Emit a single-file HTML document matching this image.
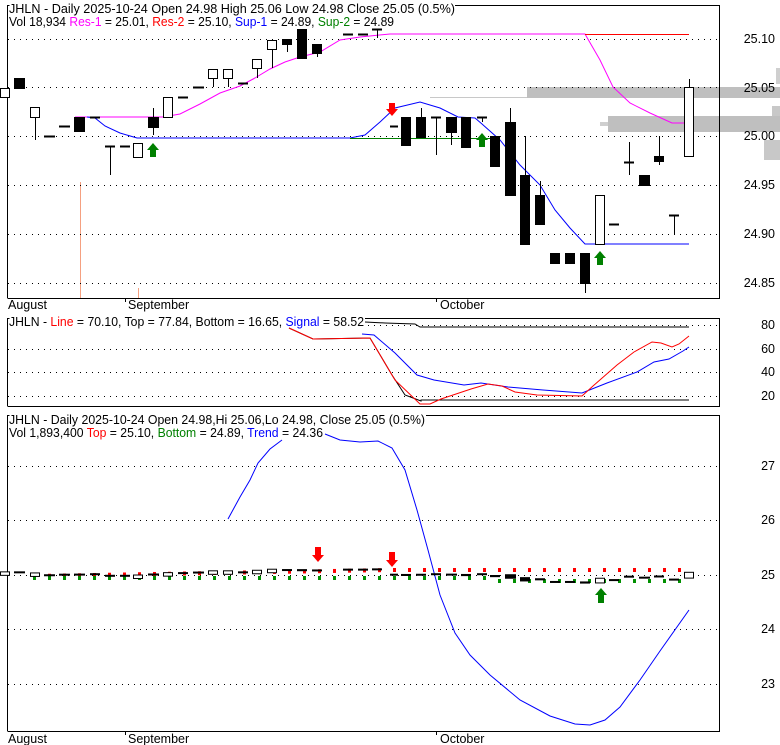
<!DOCTYPE html>
<html><head><meta charset="utf-8"><style>
body{margin:0;background:#fff;width:780px;height:745px;overflow:hidden}
svg{display:block}
text{font-family:"Liberation Sans",sans-serif;font-size:12.5px;fill:#000}
</style></head><body>
<svg id="s" width="780" height="745" xmlns="http://www.w3.org/2000/svg">
<rect x="527" y="87" width="253" height="11" fill="#bfbfbf"/>
<line x1="430" y1="97.5" x2="527" y2="97.5" stroke="#c8c8c8"/>
<rect x="608" y="116" width="172" height="16" fill="#bfbfbf"/>
<rect x="600" y="122" width="8" height="4" fill="#cfcfcf"/>
<rect x="776" y="68" width="4" height="16" fill="#cfcfcf"/>
<rect x="764" y="140" width="16" height="20" fill="#c8c8c8"/>
<rect x="772" y="106" width="8" height="10" fill="#c8c8c8"/>
<line x1="7.5" y1="150" x2="7.5" y2="298" stroke="#f5a080"/>
<line x1="80.5" y1="182" x2="80.5" y2="298" stroke="#f5a080"/>
<line x1="138.5" y1="288" x2="138.5" y2="298" stroke="#f5a080"/>
<g id="grid" stroke="#000" stroke-dasharray="1,5"></g>
<rect x="8" y="316" width="360" height="11" fill="#fff"/>
<path d="M7.5 298V5.5h2M455 5.5H719.5V298.5H7.5" fill="none" stroke="#000"/>
<text x="9" y="13" textLength="446" lengthAdjust="spacingAndGlyphs">JHLN - Daily 2025-10-24 Open 24.98  High 25.06  Low 24.98  Close 25.05 (0.5%)</text>
<text x="9" y="26" textLength="385" lengthAdjust="spacingAndGlyphs">Vol 18,934 <tspan fill="#ff00ff">Res-1</tspan> = 25.01, <tspan fill="#ff0000">Res-2</tspan> = 25.10, <tspan fill="#0000ff">Sup-1</tspan> = 24.89, <tspan fill="#008000">Sup-2</tspan> = 24.89</text>
<g text-anchor="end"><text x="775" y="43">25.10</text><text x="775" y="92">25.05</text><text x="775" y="140">25.00</text><text x="775" y="189">24.95</text><text x="775" y="238">24.90</text><text x="775" y="287">24.85</text></g>
<polyline fill="none" stroke="#ff00ff" points="75,117 163,117 180,114 200,104 220,93 240,86 255,78 270,69 285,62 300,57 320,52 340,40 360,37 390,34 585,34 600,60 613,87 630,103 650,113 672,123 684,123"/>
<line x1="585" y1="34.5" x2="689" y2="34.5" stroke="#ff0000"/>
<polyline fill="none" stroke="#0000ff" points="87,117 95,118 105,126 120,133 137,138 350,138 365,135 380,122 395,108 420,102 440,108 458,117 475,118 482,124 500,140 520,165 540,185 555,210 570,228 585,244 689,244"/>
<line x1="350" y1="138.5" x2="490" y2="138.5" stroke="#008000"/>
<g id="c1"></g>
<path d="M389 103h6v6h3l-6 7-6-7h3z" fill="#ff0000"/>
<path d="M150 157h6v-7h3l-6-7-6 7h3z" fill="#008000"/>
<path d="M479 147h6v-7h3l-6-7-6 7h3z" fill="#008000"/>
<path d="M597 265h6v-7h3l-6-7-6 7h3z" fill="#008000"/>
<text x="8" y="309">August</text><line x1="125.5" y1="298" x2="125.5" y2="302" stroke="#000"/><text x="128" y="309">September</text><line x1="436.5" y1="298" x2="436.5" y2="302" stroke="#000"/><text x="440" y="309">October</text>
<path d="M7.5 406V318.5h2M365 318.5H719.5V406.5H7.5" fill="none" stroke="#000"/>
<text x="9" y="326" textLength="355" lengthAdjust="spacingAndGlyphs">JHLN - <tspan fill="#ff0000">Line</tspan> = 70.10, Top = 77.84, Bottom = 16.65, <tspan fill="#0000ff">Signal</tspan> = 58.52</text>
<g text-anchor="end"><text x="775" y="329">80</text><text x="775" y="353">60</text><text x="775" y="376">40</text><text x="775" y="400">20</text></g>
<polyline fill="none" stroke="#000" points="365,322 385,323 415,324 420,327 689,327"/>
<polyline fill="none" stroke="#000" points="289,328 313,339 370,338 392,375 405,395 421,401 421,400 689,400"/>
<polyline fill="none" stroke="#0000ff" points="362,334 374,335 395,353 417,375 434,380 464,385 481,383 508,387 543,390 582,393 607,383 637,372 654,362 669,359 683,351 689,347"/>
<polyline fill="none" stroke="#ff0000" points="289,328 313,339 370,338 395,380 420,404 430,404 441,399 456,394 471,389 488,384 502,386 515,392 537,395 582,396 593,386 617,365 634,352 652,342 661,343 672,347 679,344 689,336"/>
<path d="M7.5 731V415.5h2M426 415.5H719.5V731.5H7.5" fill="none" stroke="#000"/>
<polyline fill="none" stroke="#0000ff" points="228,519 240,497 250,480 258,463 270,449 282,440"/>
<polyline fill="none" stroke="#0000ff" points="325,434 340,440 360,442 378,441 392,448 405,470 417,510 428,550 440,595 455,633 470,655 490,675 520,700 550,716 575,724 590,725 605,720 620,707 640,680 660,651 689,610"/>
<text x="9" y="424" textLength="416" lengthAdjust="spacingAndGlyphs">JHLN - Daily 2025-10-24 Open 24.98,Hi 25.06,Lo 24.98, Close 25.05 (0.5%)</text>
<text x="9" y="437" textLength="314" lengthAdjust="spacingAndGlyphs">Vol 1,893,400 <tspan fill="#ff0000">Top</tspan> = 25.10, <tspan fill="#008000">Bottom</tspan> = 24.89, <tspan fill="#0000ff">Trend</tspan> = 24.36</text>
<g text-anchor="end"><text x="775" y="470">27</text><text x="775" y="524">26</text><text x="775" y="579">25</text><text x="775" y="633">24</text><text x="775" y="688">23</text></g>
<g id="c3"></g>
<path d="M315 547h6v8h3l-6 7-6-7h3z" fill="#ff0000"/>
<path d="M389 552h6v8h3l-6 7-6-7h3z" fill="#ff0000"/>
<path d="M598 603h6v-8h3l-6-7-6 7h3z" fill="#008000"/>
<text x="8" y="743">August</text><line x1="125.5" y1="731" x2="125.5" y2="735" stroke="#000"/><text x="128" y="743">September</text><line x1="436.5" y1="731" x2="436.5" y2="735" stroke="#000"/><text x="440" y="743">October</text>
</svg>
<script>
var NS="http://www.w3.org/2000/svg";
function el(p,t,a){var e=document.createElementNS(NS,t);for(var k in a)e.setAttribute(k,a[k]);p.appendChild(e);return e;}
var g=document.getElementById('grid');
[39,87,136,185,234,283,325,349,372,396,466,520,575,629,684].forEach(function(y){el(g,'line',{x1:8,x2:719,y1:y+.5,y2:y+.5});});
var C=[[0,10,88,97,88,97,'h'],[14,11,78,88,78,88,'b'],[30,10,107,117,107,140,'h'],[44,11,136,136,136,136,'d'],[59,11,126,126,126,126,'d'],[74,11,117,131,117,131,'b'],[90,10,117,117,117,117,'d'],[105,10,146,146,146,175,'d'],[120,10,146,146,146,146,'d'],[133,10,143,157,143,157,'h'],[148,11,117,127,108,135,'b'],[163,10,97,117,97,117,'h'],[178,10,97,97,97,97,'d'],[193,11,87,87,87,87,'d'],[208,10,69,78,69,87,'h'],[223,10,69,78,69,87,'h'],[238,10,83,83,83,83,'d'],[252,10,59,68,59,78,'h'],[267,10,40,49,40,68,'h'],[282,10,39,44,39,52,'b'],[297,10,29,58,29,58,'b'],[312,10,44,53,44,57,'b'],[343,10,34,34,34,34,'d'],[358,10,34,34,34,34,'d'],[372,10,29,29,29,38,'d'],[390,8,126,126,126,126,'d'],[401,10,117,145,117,145,'b'],[416,10,117,137,108,137,'b'],[431,10,117,117,117,155,'d'],[446,11,117,132,117,145,'b'],[461,10,117,147,117,147,'b'],[477,10,117,117,117,122,'d'],[490,10,136,166,136,166,'b'],[505,11,122,195,108,195,'b'],[520,10,175,244,136,244,'b'],[535,10,195,224,181,224,'b'],[550,10,253,263,253,263,'b'],[565,10,253,263,253,263,'b'],[580,10,253,283,253,293,'b'],[595,10,195,244,195,244,'h'],[609,10,224,224,224,224,'d'],[624,10,162,162,142,175,'d'],[639,11,175,185,175,185,'b'],[654,10,156,161,136,165,'b'],[669,10,215,215,215,234,'d'],[684,10,87,156,79,156,'h']];
var c1=document.getElementById('c1');
C.forEach(function(c){var x=c[0],w=c[1],m=x+Math.floor(w/2)+.5;
 el(c1,'line',{x1:m,x2:m,y1:c[4],y2:c[5],stroke:'#000'});
 if(c[6]=='d')el(c1,'line',{x1:x,x2:x+w,y1:c[2]+.5,y2:c[2]+.5,stroke:'#000','stroke-width':2});
 else el(c1,'rect',{x:x+.5,y:c[2]+.5,width:w-1,height:Math.max(c[3]-c[2],2),fill:c[6]=='b'?'#000':'#fff',stroke:'#000'});
});
var c3=document.getElementById('c3');
for(var x=33;x<=690;x+=15){
 var yr=x<390?574-(x-33)/357*6:568; var yg=x<490?576:579;
 el(c3,'rect',{x:x,y:yr,width:3,height:4,fill:'#ff0000'});
 el(c3,'rect',{x:x,y:yg,width:3,height:4,fill:'#009000'});
}
C.forEach(function(c,i){var x=c[0],w=c[1];
 var mid=(c[2]+c[3])/2; var y=575-(136-mid)*0.055;
 var h=Math.max((c[3]-c[2])*0.055,1.5);
 if(c[6]=='h')el(c3,'rect',{x:x+.5,y:y-h/2,width:w-1,height:h+2,fill:'#fff',stroke:'#000'});
 else el(c3,'rect',{x:x,y:y-h/2,width:w,height:h+0.5,fill:'#000'});
});
</script>
</body></html>
